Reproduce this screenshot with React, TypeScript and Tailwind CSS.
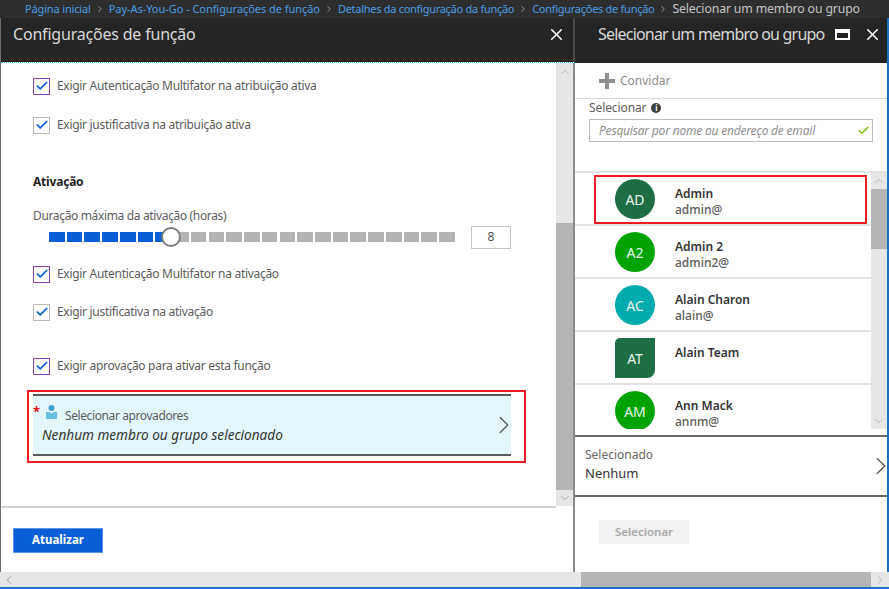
import { Check, ChevronDown, ChevronLeft, ChevronRight, ChevronUp, X } from "lucide-react";

const FONT = "font-['Noto_Sans','Open_Sans',sans-serif]";

const PEOPLE = [
  { initials: "AD", name: "Admin", mail: "admin@", color: "bg-[#1e6e45]", square: false },
  { initials: "A2", name: "Admin 2", mail: "admin2@", color: "bg-[#00a300]", square: false },
  { initials: "AC", name: "Alain Charon", mail: "alain@", color: "bg-[#00abad]", square: false },
  { initials: "AT", name: "Alain Team", mail: "", color: "bg-[#1e6e45]", square: true },
  { initials: "AM", name: "Ann Mack", mail: "annm@", color: "bg-[#00a300]", square: false },
];

const CRUMBS = [
  { label: "Página inicial", spacing: "tracking-[-0.15px]" },
  { label: "Pay-As-You-Go - Configurações de função", spacing: "tracking-[-0.05px]" },
  { label: "Detalhes da configuração da função", spacing: "tracking-[-0.28px]" },
  { label: "Configurações de função", spacing: "tracking-[-0.28px]" },
];

function CheckRow({ label, focused, className }: { label: string; focused?: boolean; className: string }) {
  return (
    <div className={`flex items-center gap-[7px] ${className}`}>
      <div
        className={`flex h-[17px] w-[17px] items-center justify-center border bg-white ${
          focused ? "border-[#8b45ab]" : "border-[#b9b9b9]"
        }`}
      >
        <Check size={14} strokeWidth={3} className="text-[#0a5fd8]" />
      </div>
      <span className="text-[12px] tracking-[-0.3px] text-[#5c5c5c]">{label}</span>
    </div>
  );
}

function Slider() {
  const segments = Array.from({ length: 23 }, (_, i) => i);
  return (
    <div className="relative ml-4 mt-[1px] flex h-[22px] items-center gap-4">
      <div className="relative flex w-[406px] items-center justify-between">
        {segments.map((i) => (
          <div key={i} className={`h-[10px] w-[15.6px] ${i < 7 ? "bg-[#0a5fd8]" : "bg-[#b4b4b4]"}`} />
        ))}
        <div className="absolute left-[112px] top-[-5px] h-[20px] w-[20px] rounded-full border-2 border-[#7d7d7d] bg-white" />
      </div>
      <div className="flex h-[23px] w-[40px] items-center justify-center border border-[#c4c4c4] text-[12px] text-[#505050]">
        8
      </div>
    </div>
  );
}

function LeftPanel() {
  return (
    <div className="flex w-[575px] flex-col border-l border-l-[#6f6f6f]">
      <div className="flex h-[45px] border-b border-dotted border-b-[#19c3e6]">
        <div className="flex flex-1 items-start justify-between border-r-2 border-r-[#4a4a4a] bg-[#252525] pr-[6px] pl-[12px] pt-[4px]">
          <span className="text-[16px] tracking-[-0.2px] text-[#d8d8d8]">Configurações de função</span>
          <X size={19} strokeWidth={2} className="mr-[1px] mt-[3px] text-white" />
        </div>
      </div>
      <div className="flex flex-1 border-r-2 border-r-[#8a8a8a]">
        <div className="flex min-w-0 flex-1 flex-col">
          <div className="relative flex-1 pl-[32px]">
            <CheckRow label="Exigir Autenticação Multifator na atribuição ativa" focused className="mt-[14px]" />
            <CheckRow label="Exigir justificativa na atribuição ativa" className="mt-[21px]" />
            <div className="mt-[39px] text-[12px] font-bold tracking-[-0.2px] text-[#222]">Ativação</div>
            <div className="mt-[16px] text-[12px] tracking-[-0.35px] text-[#5c5c5c]">
              Duração máxima da ativação (horas)
            </div>
            <Slider />
            <CheckRow label="Exigir Autenticação Multifator na ativação" focused className="mt-[17px]" />
            <CheckRow label="Exigir justificativa na ativação" className="mt-[20px]" />
            <CheckRow label="Exigir aprovação para ativar esta função" focused className="mt-[36px]" />
            <div className="relative mt-[19px] flex h-[62px] w-[478px] items-center justify-between border-y-2 border-y-[#5a5a5a] bg-[#e3f6fc]">
              <div className="pb-[2px] pl-[9px]">
                <div className="flex items-end gap-[8px] pl-[4px]">
                  <svg width="11" height="14" viewBox="0 0 11 14" className="mb-[6px]">
                    <circle cx="5.5" cy="3" r="3" fill="#3f9fd3" />
                    <path d="M0 7h3.5l2 1.5 2-1.5H11v7H0z" fill="#6cbfe4" />
                  </svg>
                  <span className="text-[12px] leading-[18px] tracking-[-0.4px] text-[#5c5c5c]">
                    Selecionar aprovadores
                  </span>
                </div>
                <div className="mt-[1px] text-[13.6px] italic leading-[18px] text-[#333]">
                  Nenhum membro ou grupo selecionado
                </div>
              </div>
              <ChevronRight size={30} strokeWidth={1} className="mr-[-8px] text-[#555]" />
              <span className="absolute left-0 top-[8px] text-[13px] font-bold leading-[14px] text-[#e81123]">*</span>
            </div>
            <div className="pointer-events-none absolute left-[26px] top-[327px] h-[73px] w-[499px] border-2 border-[#ed1c24]" />
          </div>
          <div className="flex h-[66px] items-center border-t-2 border-t-[#d2d2d2] pl-[12px]">
            <button
              type="button"
              className="h-[25px] w-[90px] border border-[#5b93e6] bg-[#0a5fd8] text-[11.5px] font-bold text-white"
            >
              Atualizar
            </button>
          </div>
        </div>
        <div className="mb-[66px] flex w-[17px] flex-col bg-[#e6e6e6]">
          <div className="flex h-[18px] items-center justify-center">
            <ChevronUp size={14} strokeWidth={1} className="text-[#9a9a9a]" />
          </div>
          <div className="mt-[142px] flex-1 bg-[#b5b5b5]" />
          <div className="flex h-[16px] items-center justify-center">
            <ChevronDown size={14} strokeWidth={1.2} className="text-[#8a8a8a]" />
          </div>
        </div>
      </div>
    </div>
  );
}

function PersonRow({ initials, name, mail, color, square }: (typeof PEOPLE)[number]) {
  return (
    <div className="flex h-[53px] shrink-0 items-start border-b-2 border-b-[#e2e2e2] pl-[40px] pt-[6px]">
      <div
        className={`flex h-[40px] w-[40px] items-center justify-center text-[14px] text-[#e8f5ee] ${color} ${
          square ? "rounded-tl-[5px] rounded-br-[8px]" : "rounded-full"
        }`}
      >
        {initials}
      </div>
      <div className="ml-[20px] mt-[7px]">
        <div className="text-[12px] font-semibold leading-[16px] text-[#333]">{name}</div>
        <div className="mt-[2px] text-[12px] font-medium leading-[12px] text-[#5c5c5c]">{mail}</div>
      </div>
    </div>
  );
}

function RightPanel() {
  return (
    <div className="flex min-w-0 flex-1 flex-col border-r-2 border-r-[#1f6fc4]">
      <div className="flex h-[45px] items-start justify-between border-b border-b-[#252525] bg-[#252525] pl-[23px] pr-[5px] pt-[4px]">
        <span className="whitespace-nowrap text-[16px] tracking-[-0.8px] text-[#d8d8d8]">
          Selecionar um membro ou grupo
        </span>
        <div className="flex items-center gap-[13px] pt-[3px]">
          <div className="h-[11px] w-[15px] border-2 border-t-[4px] border-white" />
          <X size={19} strokeWidth={2} className="text-white" />
        </div>
      </div>
      <div className="flex h-[36px] items-center gap-[5px] border-b border-b-[#d8d8d8] pl-[24px]">
        <svg width="16" height="16" viewBox="0 0 16 16">
          <path d="M6 0h4v6h6v4h-6v6H6v-6H0V6h6z" fill="#8f8f8f" />
        </svg>
        <span className="text-[12px] text-[#8a8a8a]">Convidar</span>
      </div>
      <div className="flex h-[74px] flex-col border-b-2 border-b-[#e2e2e2] pl-[14px]">
        <div className="mt-[-1px] flex h-[19px] items-center gap-[5px] text-[12px] tracking-[-0.1px] text-[#5c5c5c]">
          Selecionar
          <span className="flex h-[10px] w-[10px] items-center justify-center rounded-full bg-[#3d3d3d] text-[8px] font-bold text-white">
            i
          </span>
        </div>
        <div className="mt-[2px] flex h-[23px] w-[284px] items-center justify-between border border-[#bdbdbd] pl-[9px] pr-[2px]">
          <span className="text-[12px] italic tracking-[-0.2px] text-[#8f8f8f]">
            Pesquisar por nome ou endereço de email
          </span>
          <Check size={13} strokeWidth={2.5} className="text-[#7fba00]" />
        </div>
      </div>
      <div className="relative flex h-[264px] border-b-2 border-b-[#6a6a6a]">
        <div className="h-[256px] min-w-0 flex-1 overflow-hidden bg-white">
          {PEOPLE.map((person) => (
            <PersonRow key={person.initials} {...person} />
          ))}
        </div>
        <div className="flex h-[256px] w-[16px] flex-col bg-[#e6e6e6]">
          <div className="flex h-[16px] items-center justify-center">
            <ChevronUp size={14} strokeWidth={1} className="text-[#9a9a9a]" />
          </div>
          <div className="h-[60px] bg-[#b5b5b5]" />
          <div className="flex-1" />
          <div className="flex h-[16px] items-center justify-center">
            <ChevronDown size={14} strokeWidth={1} className="text-[#9a9a9a]" />
          </div>
        </div>
        <div className="pointer-events-none absolute left-[19px] top-[2px] h-[49px] w-[273px] border-2 border-[#ed1c24]" />
      </div>
      <div className="flex h-[60px] items-center justify-between border-b-2 border-b-[#6a6a6a]">
        <div className="pb-[4px] pl-[10px]">
          <div className="text-[12px] leading-[18px] text-[#666]">Selecionado</div>
          <div className="text-[13px] leading-[19px] text-[#333]">Nenhum</div>
        </div>
        <ChevronRight size={30} strokeWidth={1} className="mr-[-9px] text-[#555]" />
      </div>
      <div className="pl-[24px] pt-[21px]">
        <button type="button" className="h-[24px] w-[90px] bg-[#f1f1f1] text-[11.5px] font-semibold text-[#a9a9a9]">
          Selecionar
        </button>
      </div>
    </div>
  );
}

export default function App() {
  return (
    <div className={`flex h-[589px] w-[889px] flex-col overflow-hidden bg-white ${FONT}`}>
      <div className="flex h-[18px] shrink-0 items-center bg-[#2e2e2e] pl-[25px] text-[11px]">
        {CRUMBS.map((crumb) => (
          <span key={crumb.label} className="flex items-center">
            <span className={`text-[#4a9be0] ${crumb.spacing}`}>{crumb.label}</span>
            <ChevronRight size={10} strokeWidth={1.5} className="mx-[4px] text-[#c8c8c8]" />
          </span>
        ))}
        <span className="text-[12.3px] tracking-[-0.15px] text-[#c4c4c4]">Selecionar um membro ou grupo</span>
      </div>
      <div className="flex flex-1">
        <LeftPanel />
        <RightPanel />
      </div>
      <div className="flex h-[15px] shrink-0 bg-[#e6e6e6]">
        <div className="flex w-[17px] items-center justify-center">
          <ChevronLeft size={14} strokeWidth={1.2} className="text-[#8a8a8a]" />
        </div>
        <div className="ml-[564px] w-[290px] bg-[#b5b5b5]" />
        <div className="flex flex-1 items-center justify-center">
          <ChevronRight size={14} strokeWidth={1} className="text-[#9a9a9a]" />
        </div>
      </div>
      <div className="h-[2px] shrink-0 bg-[#1f6fc4]" />
    </div>
  );
}
